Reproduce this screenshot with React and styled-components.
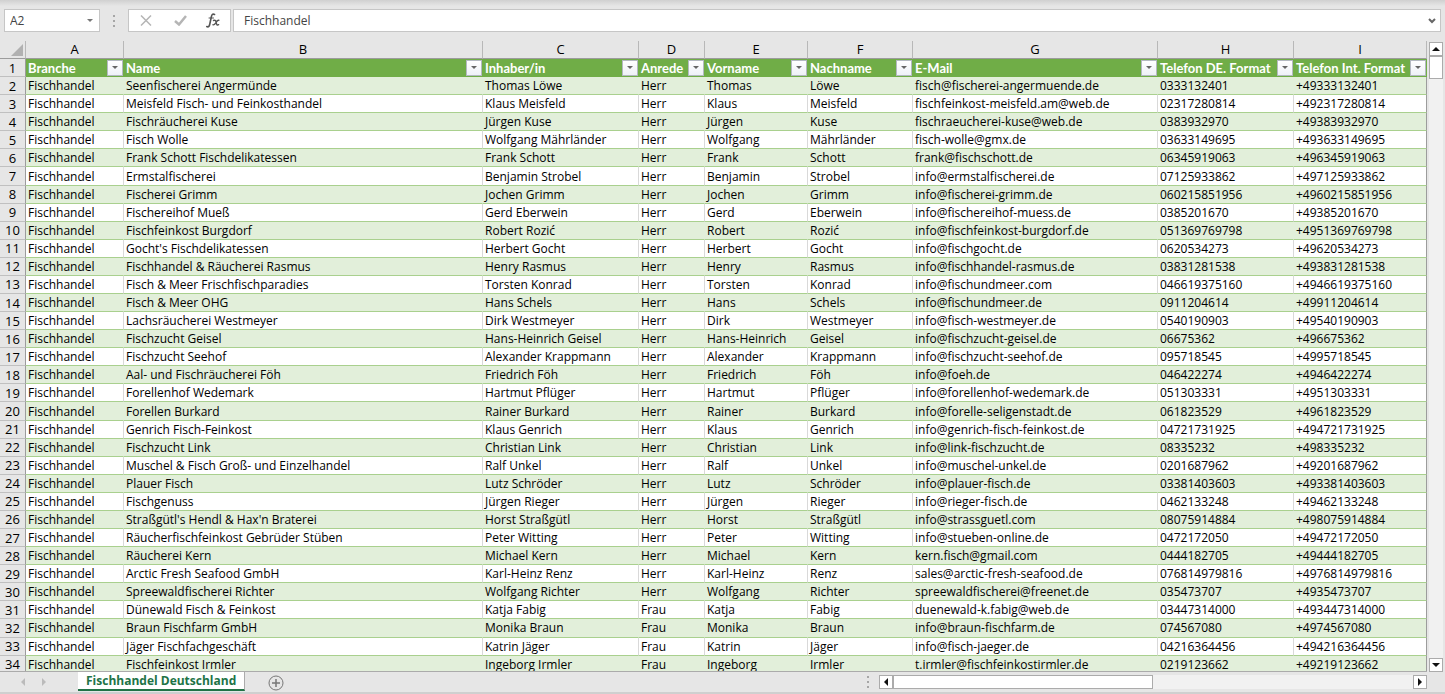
import React, { useState } from 'react';
import styled, { createGlobalStyle } from 'styled-components';

const GlobalStyle = createGlobalStyle`
    * {
        box-sizing: border-box;
    }

    body {
        margin: 0;
        background: #e6e6e6;
        color: #000;
        font: 12px/18px "Open Sans", sans-serif;
        font-variant-ligatures: none;
    }

    button, input {
        margin: 0;
        padding: 0;
        border: 0;
        border-radius: 0;
        background: none;
        color: inherit;
        font: inherit;
    }
`;

const Workbook = styled.main`
    display: flex;
    flex-direction: column;
    height: 100vh;
    min-width: 1100px;
    overflow: hidden;
`;

const FormulaBar = styled.header`
    display: flex;
    align-items: center;
    flex: none;
    height: 41px;
    padding: 0 4px;
    background: linear-gradient(#d0d0d0, #e6e6e6 6px);
    color: #444;
`;

const Box = styled.div`
    display: flex;
    align-items: center;
    flex: ${props => (props.$grow ? 1 : 'none')};
    width: ${props => (props.$width ? `${props.$width}px` : 'auto')};
    height: 23px;
    margin-right: ${props => (props.$gap || 0)}px;
    border: 1px solid #c6c6c6;
    background: #fff;

    input {
        flex: 1;
        min-width: 0;
        padding-left: ${props => (props.$grow ? 10 : 5)}px;
    }
`;

const ToolButton = styled.button`
    display: flex;
    align-items: center;
    justify-content: center;
    flex: none;
    width: ${props => props.$width}px;
    height: 21px;
`;

const Grip = styled.svg`
    flex: none;
    width: 3px;
    height: 12px;
    margin-right: ${props => props.$gap}px;
    fill: #a6a6a6;
`;

const Middle = styled.section`
    display: flex;
    flex: 1;
    min-height: 0;
`;

const SheetArea = styled.div`
    flex: 1;
    min-width: 0;
    overflow: hidden;
    border-bottom: 1px solid #ababab;
`;

const Sheet = styled.table`
    width: 100%;
    height: calc(100% + 3px);
    table-layout: fixed;
    border-collapse: separate;
    border-spacing: 0;
    background: #fff;
    white-space: nowrap;
`;

const ColumnHead = styled.th`
    height: 18px;
    padding: 0 0 1px;
    border-right: 1px solid #b8b8b8;
    border-bottom: 1px solid #9c9c9c;
    background: #e6e6e6;
    font: 13px/16px "Open Sans", sans-serif;
`;

const Corner = styled(ColumnHead)`
    text-align: right;

    svg {
        display: block;
        margin: 2px 2px 0 auto;
    }
`;

const RowHead = styled.th`
    height: 18px;
    padding: 0;
    border-right: 1px solid #9c9c9c;
    border-bottom: 1px solid #c0c0c0;
    background: #e6e6e6;
    font: 13px/16px "Open Sans", sans-serif;
`;

const FieldHead = styled.th`
    padding: 0;
    border-bottom: 1px solid #70ad47;
    background: #70ad47;
    color: #fff;
    font: bold 13px/16px Lato, "Open Sans", sans-serif;
    text-align: left;

    div {
        display: flex;
        justify-content: space-between;
        padding-left: 2px;
    }
`;

const FilterButton = styled.button`
    display: flex;
    align-items: center;
    justify-content: center;
    flex: none;
    width: 16px;
    height: 16px;
    margin-right: 1px;
    border: 1px solid #b4b9c1;
    background: linear-gradient(#fff, #eef1f7);
`;

const Cell = styled.td`
    padding: 1px 0 0 2px;
    overflow: hidden;
    border-bottom: 1px solid #a9d08e;
    border-right: 1px solid ${props => (props.$banded ? '#e2efda' : '#d9d9d9')};
    background: ${props => (props.$banded ? '#e2efda' : '#fff')};
    line-height: 16px;

    &:last-child {
        border-right-color: #9c9c9c;
    }
`;

const VerticalBar = styled.aside`
    display: flex;
    flex-direction: column;
    flex: none;
    width: 18px;
    padding: 1px 2px 0 2px;
`;

const ScrollTrack = styled.div`
    display: flex;
    flex: 1;
    flex-direction: ${props => (props.$vertical ? 'column' : 'row')};
    background: #f1f1f1;
`;

const Thumb = styled.div`
    width: ${props => props.$width};
    height: ${props => props.$height};
    border: 1px solid #ababab;
    background: #fff;
`;

const ScrollButton = styled.button`
    display: flex;
    align-items: center;
    justify-content: center;
    flex: none;
    width: 14px;
    height: 14px;
    border: 1px solid #ababab;
    background: #fff;
`;

const BottomBar = styled.footer`
    display: flex;
    flex: none;
    height: 22px;
    border-bottom: 2px solid #cfcfcf;
`;

const SheetNav = styled.nav`
    display: flex;
    align-items: center;
    gap: 17px;
    width: 78px;
    padding-left: 21px;
`;

const SheetTab = styled.button`
    height: 19px;
    padding: 0 8px;
    border-right: 1px solid #ababab;
    border-bottom: 2px solid #217346;
    background: #fff;
    color: #217346;
    font: bold 12px/16px "Open Sans", sans-serif;
`;

const AddSheet = styled.button`
    display: flex;
    align-items: center;
    margin: 3px auto 0 23px;
    height: 16px;
`;

const HorizontalBar = styled.div`
    display: flex;
    align-items: center;
    flex: none;
    width: 40%;
    padding-right: 18px;
`;

const paths = {
    down: 'M0 0h6L3 3z',
    up: 'M0 4h8L4 0z',
    left: 'M4 0v8L0 4z',
    right: 'M0 0v8l4-4z',
    bigDown: 'M0 0h8L4 4z',
};

const sizes = { down: [6, 3], up: [8, 4], left: [4, 8], right: [4, 8], bigDown: [8, 4] };

function Arrow({ kind, color = '#111' }) {
    const [width, height] = sizes[kind];
    return (
        <svg width={width} height={height} fill={color} aria-hidden="true">
            <path d={paths[kind]} />
        </svg>
    );
}

function GripDots({ gap }) {
    return (
        <Grip $gap={gap} viewBox="0 0 3 12" aria-hidden="true">
            <path d="M0 0h2v2H0zM0 5h2v2H0zM0 10h2v2H0z" />
        </Grip>
    );
}

const columns = [
    { letter: 'A', label: 'Branche', width: 98 },
    { letter: 'B', label: 'Name', width: 359 },
    { letter: 'C', label: 'Inhaber/in', width: 156 },
    { letter: 'D', label: 'Anrede', width: 66 },
    { letter: 'E', label: 'Vorname', width: 103 },
    { letter: 'F', label: 'Nachname', width: 105 },
    { letter: 'G', label: 'E-Mail', width: 245 },
    { letter: 'H', label: 'Telefon DE. Format', width: 136 },
    { letter: 'I', label: 'Telefon Int. Format', width: 133 },
];

// name, first name, last name, e-mail, phone number
const contacts = [
    ['Seenfischerei Angermünde', 'Thomas', 'Löwe', 'fisch@fischerei-angermuende.de', '0333132401'],
    ['Meisfeld Fisch- und Feinkosthandel', 'Klaus', 'Meisfeld', 'fischfeinkost-meisfeld.am@web.de', '02317280814'],
    ['Fischräucherei Kuse', 'Jürgen', 'Kuse', 'fischraeucherei-kuse@web.de', '0383932970'],
    ['Fisch Wolle', 'Wolfgang', 'Mährländer', 'fisch-wolle@gmx.de', '03633149695'],
    ['Frank Schott Fischdelikatessen', 'Frank', 'Schott', 'frank@fischschott.de', '06345919063'],
    ['Ermstalfischerei', 'Benjamin', 'Strobel', 'info@ermstalfischerei.de', '07125933862'],
    ['Fischerei Grimm', 'Jochen', 'Grimm', 'info@fischerei-grimm.de', '060215851956'],
    ['Fischereihof Mueß', 'Gerd', 'Eberwein', 'info@fischereihof-muess.de', '0385201670'],
    ['Fischfeinkost Burgdorf', 'Robert', 'Rozić', 'info@fischfeinkost-burgdorf.de', '051369769798'],
    ["Gocht's Fischdelikatessen", 'Herbert', 'Gocht', 'info@fischgocht.de', '0620534273'],
    ['Fischhandel & Räucherei Rasmus', 'Henry', 'Rasmus', 'info@fischhandel-rasmus.de', '03831281538'],
    ['Fisch & Meer Frischfischparadies', 'Torsten', 'Konrad', 'info@fischundmeer.com', '046619375160'],
    ['Fisch & Meer OHG', 'Hans', 'Schels', 'info@fischundmeer.de', '0911204614'],
    ['Lachsräucherei Westmeyer', 'Dirk', 'Westmeyer', 'info@fisch-westmeyer.de', '0540190903'],
    ['Fischzucht Geisel', 'Hans-Heinrich', 'Geisel', 'info@fischzucht-geisel.de', '06675362'],
    ['Fischzucht Seehof', 'Alexander', 'Krappmann', 'info@fischzucht-seehof.de', '095718545'],
    ['Aal- und Fischräucherei Föh', 'Friedrich', 'Föh', 'info@foeh.de', '046422274'],
    ['Forellenhof Wedemark', 'Hartmut', 'Pflüger', 'info@forellenhof-wedemark.de', '051303331'],
    ['Forellen Burkard', 'Rainer', 'Burkard', 'info@forelle-seligenstadt.de', '061823529'],
    ['Genrich Fisch-Feinkost', 'Klaus', 'Genrich', 'info@genrich-fisch-feinkost.de', '04721731925'],
    ['Fischzucht Link', 'Christian', 'Link', 'info@link-fischzucht.de', '08335232'],
    ['Muschel & Fisch Groß- und Einzelhandel', 'Ralf', 'Unkel', 'info@muschel-unkel.de', '0201687962'],
    ['Plauer Fisch', 'Lutz', 'Schröder', 'info@plauer-fisch.de', '03381403603'],
    ['Fischgenuss', 'Jürgen', 'Rieger', 'info@rieger-fisch.de', '0462133248'],
    ["Straßgütl's Hendl & Hax'n Braterei", 'Horst', 'Straßgütl', 'info@strassguetl.com', '08075914884'],
    ['Räucherfischfeinkost Gebrüder Stüben', 'Peter', 'Witting', 'info@stueben-online.de', '0472172050'],
    ['Räucherei Kern', 'Michael', 'Kern', 'kern.fisch@gmail.com', '0444182705'],
    ['Arctic Fresh Seafood GmbH', 'Karl-Heinz', 'Renz', 'sales@arctic-fresh-seafood.de', '076814979816'],
    ['Spreewaldfischerei Richter', 'Wolfgang', 'Richter', 'spreewaldfischerei@freenet.de', '035473707'],
    ['Dünewald Fisch & Feinkost', 'Katja', 'Fabig', 'duenewald-k.fabig@web.de', '03447314000', 'Frau'],
    ['Braun Fischfarm GmbH', 'Monika', 'Braun', 'info@braun-fischfarm.de', '074567080', 'Frau'],
    ['Jäger Fischfachgeschäft', 'Katrin', 'Jäger', 'info@fisch-jaeger.de', '04216364456', 'Frau'],
    ['Fischfeinkost Irmler', 'Ingeborg', 'Irmler', 't.irmler@fischfeinkostirmler.de', '0219123662', 'Frau'],
];

const rows = contacts.map(([name, first, last, mail, phone, title = 'Herr']) => [
    'Fischhandel', name, `${first} ${last}`, title, first, last, mail, phone, `+49${phone.slice(1)}`,
]);

export default function App() {
    const [cellName, setCellName] = useState('A2');
    const [formula, setFormula] = useState('Fischhandel');

    return (
        <Workbook>
            <GlobalStyle />
            <FormulaBar>
                <Box $width={96} $gap={13}>
                    <input
                        aria-label="Name Box"
                        value={cellName}
                        onChange={e => setCellName(e.target.value)}
                    />
                    <ToolButton $width={18} aria-label="Show names">
                        <Arrow kind="down" color="#777" />
                    </ToolButton>
                </Box>
                <GripDots gap={12} />
                <Box $width={103} $gap={2}>
                    <ToolButton $width={34} aria-label="Cancel">
                        <svg width="12" height="11" fill="none" stroke="#b5b5b5" strokeWidth="1.5">
                            <path d="M1 .5l10 10M11 .5l-10 10" />
                        </svg>
                    </ToolButton>
                    <ToolButton $width={34} aria-label="Enter">
                        <svg width="13" height="11" fill="none" stroke="#b5b5b5" strokeWidth="2.5">
                            <path d="M1 6l4 3.5L12 1" />
                        </svg>
                    </ToolButton>
                    <ToolButton $width={31} aria-label="Insert Function">
                        <svg width="14" height="15" fill="none" stroke="#555" strokeLinecap="round">
                            <path d="M8.500 1.500C6.500 .2 5.700 2 5.300 4L3.800 11c-.4 2-1.200 3.400-3 2.600" strokeWidth="1.600" />
                            <path d="M3 5h4.500" />
                            <path d="M7.500 7.500c2-1 2.300.5 2.700 2.200s.8 3 2.400 2M12.800 7.300c-1.500-.3-2 1-3 2.500s-1.500 2.400-2.800 2" strokeWidth="1.400" />
                        </svg>
                    </ToolButton>
                </Box>
                <Box $grow>
                    <input
                        aria-label="Formula"
                        value={formula}
                        onChange={e => setFormula(e.target.value)}
                    />
                    <ToolButton $width={16} aria-label="Expand formula bar">
                        <svg width="8" height="6" fill="none" stroke="#666" strokeWidth="2">
                            <path d="M1 1l3 3 3-3" />
                        </svg>
                    </ToolButton>
                </Box>
            </FormulaBar>
            <Middle>
                <SheetArea>
                    <Sheet>
                        <colgroup>
                            <col width="26" />
                            {columns.map(({ letter, width }) => <col key={letter} width={width} />)}
                        </colgroup>
                        <thead>
                            <tr>
                                <Corner aria-label="Select all">
                                    <svg width="12" height="12" fill="#b1b1b1"><path d="M12 0v12H0z" /></svg>
                                </Corner>
                                {columns.map(({ letter }) => (
                                    <ColumnHead key={letter} scope="col">{letter}</ColumnHead>
                                ))}
                            </tr>
                        </thead>
                        <tbody>
                            <tr>
                                <RowHead scope="row">1</RowHead>
                                {columns.map(({ letter, label }) => (
                                    <FieldHead key={letter}>
                                        <div>
                                            {label}
                                            <FilterButton aria-label={`Filter ${label}`}>
                                                <Arrow kind="down" color="#666" />
                                            </FilterButton>
                                        </div>
                                    </FieldHead>
                                ))}
                            </tr>
                            {rows.map((row, i) => (
                                <tr key={row[1]}>
                                    <RowHead scope="row">{i + 2}</RowHead>
                                    {row.map((value, j) => (
                                        <Cell key={columns[j].letter} $banded={i % 2 === 0}>{value}</Cell>
                                    ))}
                                </tr>
                            ))}
                        </tbody>
                    </Sheet>
                </SheetArea>
                <VerticalBar>
                    <ScrollButton aria-label="Scroll up"><Arrow kind="up" /></ScrollButton>
                    <ScrollTrack $vertical>
                        <Thumb $width="14px" $height="23px" />
                    </ScrollTrack>
                    <ScrollButton aria-label="Scroll down"><Arrow kind="bigDown" /></ScrollButton>
                </VerticalBar>
            </Middle>
            <BottomBar>
                <SheetNav>
                    <button type="button" aria-label="Previous sheet"><Arrow kind="left" color="#bbb" /></button>
                    <button type="button" aria-label="Next sheet"><Arrow kind="right" color="#bbb" /></button>
                </SheetNav>
                <SheetTab>Fischhandel Deutschland</SheetTab>
                <AddSheet aria-label="New sheet">
                    <svg width="16" height="16" fill="none" stroke="#777">
                        <circle cx="8" cy="8" r="7" />
                        <path d="M4 8h8M8 4v8" strokeWidth="1.500" />
                    </svg>
                </AddSheet>
                <HorizontalBar>
                    <GripDots gap={9} />
                    <ScrollButton aria-label="Scroll left"><Arrow kind="left" /></ScrollButton>
                    <ScrollTrack>
                        <Thumb $width="50%" $height="14px" />
                    </ScrollTrack>
                    <ScrollButton aria-label="Scroll right"><Arrow kind="right" /></ScrollButton>
                </HorizontalBar>
            </BottomBar>
        </Workbook>
    );
}
